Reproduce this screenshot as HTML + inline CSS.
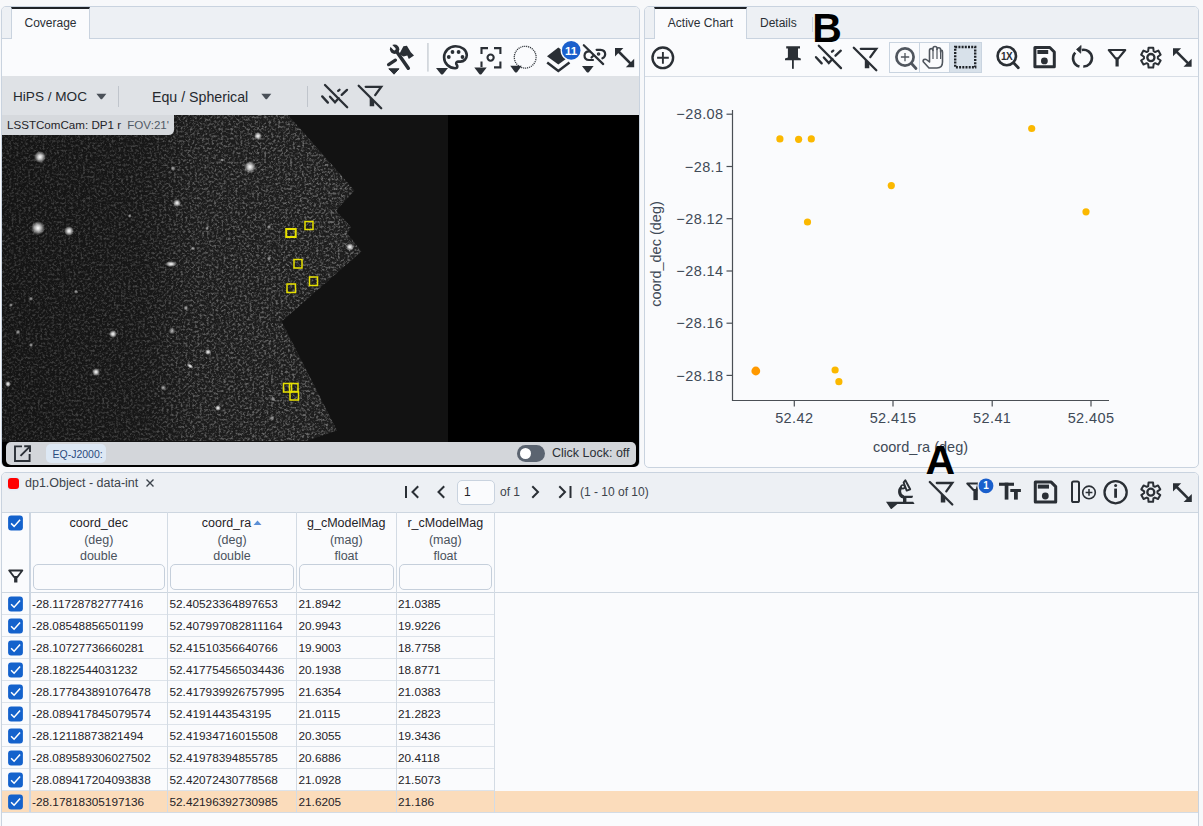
<!DOCTYPE html>
<html><head><meta charset="utf-8">
<style>
*{box-sizing:border-box;margin:0;padding:0}
html,body{width:1203px;height:826px;overflow:hidden;background:#f7f8fa;font-family:"Liberation Sans",sans-serif;color:#1f2328}
.abs{position:absolute}
.panel{position:absolute;border:1px solid #c9d3df;border-radius:5px;background:#fafbfd;overflow:hidden}
.tabbar{position:absolute;left:0;right:0;top:0;height:32px;background:#edf0f4;border-bottom:1px solid #c9d3df}
.tab{position:absolute;top:0;height:32px;background:#fafbfd;border-left:1px solid #c9d3df;border-right:1px solid #c9d3df;border-top:2px solid #1f2328;font-size:12px;color:#2a2f35;text-align:center;line-height:28px}
.tlab{position:absolute;font-size:12px;color:#2a2f35}
.tb{position:absolute;left:0;right:0;height:38px;border-bottom:1px solid #d8dee6;background:#fafbfd}
svg{position:absolute;overflow:visible}
.hd{font-size:12.5px;color:#1f2328;text-align:center;white-space:nowrap}
.hd2{font-size:12.5px;color:#4a525c;text-align:center;white-space:nowrap}
.cell{font-size:11.8px;color:#1f2328;white-space:nowrap}

</style></head><body>

<!-- LEFT PANEL -->
<div class="panel" style="left:1px;top:6px;width:639px;height:461px;">
  <div class="tabbar"></div>
  <div class="tab" style="left:9px;width:79px;">Coverage</div>
  <div class="tb" style="top:32px;"></div>
</div>


<!-- IMAGE AREA -->
<div class="abs" style="left:2px;top:77px;width:637px;height:390px;overflow:hidden;border-radius:0 0 5px 5px"><svg style="left:0;top:0;width:637px;height:390px" width="637" height="390" viewBox="2 77 637 390">
  <defs>
    <filter id="noise" x="2" y="115" width="362" height="328" filterUnits="userSpaceOnUse">
      <feTurbulence type="fractalNoise" baseFrequency="0.42" numOctaves="3" seed="11" result="t"/>
      <feColorMatrix in="t" type="matrix" values="0 0 0 0 1  0 0 0 0 1  0 0 0 0 1  3 0 0 0 -1.35"/>
    </filter>
    <linearGradient id="mg" gradientUnits="userSpaceOnUse" x1="2" x2="362" y1="0" y2="0">
      <stop offset="0" stop-color="#fff" stop-opacity="0.17"/><stop offset="0.4" stop-color="#fff" stop-opacity="0.2"/><stop offset="0.52" stop-color="#fff" stop-opacity="0.29"/><stop offset="1" stop-color="#fff" stop-opacity="0.36"/>
    </linearGradient>
    <mask id="mk" maskUnits="userSpaceOnUse" x="2" y="115" width="362" height="328"><rect x="2" y="115" width="362" height="328" fill="url(#mg)"/></mask>
    <clipPath id="poly"><polygon points="2,115 288,115 354.6,190.5 336,210.7 351,227 347.7,234 361.5,251.4 281.7,321.4 337,430.6 306,441 2,441"/></clipPath>
    <linearGradient id="lg" x1="0" x2="1" y1="0" y2="0">
      <stop offset="0" stop-color="#141414"/><stop offset="0.4" stop-color="#171717"/><stop offset="0.55" stop-color="#1c1c1c"/><stop offset="1" stop-color="#1e1e1e"/>
    </linearGradient>
    <radialGradient id="star"><stop offset="0" stop-color="#fff" stop-opacity="1"/><stop offset="0.35" stop-color="#eee" stop-opacity="0.8"/><stop offset="1" stop-color="#fff" stop-opacity="0"/></radialGradient>
  </defs>
  <rect x="2" y="77" width="637" height="390" fill="#000"/>
  <rect x="2" y="115" width="446" height="327" fill="#121212"/>
  <g clip-path="url(#poly)">
    <rect x="2" y="115" width="360" height="326" fill="url(#lg)"/>
    <g mask="url(#mk)"><rect x="2" y="115" width="360" height="326" filter="url(#noise)"/></g>
    <g fill="url(#star)">
      <circle cx="40" cy="157" r="6"/><circle cx="250" cy="167" r="6"/><circle cx="38" cy="228" r="7"/><circle cx="69" cy="231" r="5"/>
      <circle cx="177" cy="203" r="4"/><ellipse cx="171" cy="264" rx="6" ry="3"/><circle cx="113" cy="334" r="4"/><circle cx="96" cy="372" r="4"/>
      <circle cx="350" cy="247" r="4"/><circle cx="208" cy="352" r="3"/><ellipse cx="190" cy="366" rx="4" ry="2" transform="rotate(35 190 366)"/><circle cx="8" cy="384" r="3"/>
      <circle cx="218" cy="408" r="3"/><circle cx="258" cy="136" r="4"/>
      <g opacity="0.6"><circle cx="172" cy="331" r="3.5"/><circle cx="163.3" cy="387.7" r="3"/><circle cx="31" cy="298.7" r="2.2"/><circle cx="18" cy="332" r="2.5"/>
      <circle cx="31" cy="345" r="2.2"/><circle cx="76" cy="291.7" r="2.2"/><circle cx="185.8" cy="308" r="2.5"/><circle cx="272" cy="418" r="2.5"/><circle cx="273" cy="399" r="2.5"/><circle cx="11" cy="305" r="2"/>
      <circle cx="173" cy="168.6" r="2.5"/><circle cx="129.7" cy="216" r="2"/><circle cx="269" cy="227" r="2.2"/><circle cx="207" cy="228.5" r="2"/><circle cx="193" cy="248.4" r="2.2"/><circle cx="269" cy="258.4" r="2.2"/><circle cx="222" cy="160" r="1.8"/></g>
    </g>
  </g>
  <g fill="none" stroke="#e6e000" stroke-width="1.5">
    <rect x="286.2" y="229" width="9.5" height="8" stroke-width="2"/>
    <rect x="305" y="221.5" width="8" height="8"/>
    <rect x="294" y="259.5" width="8" height="8.5"/>
    <rect x="309.5" y="277" width="8" height="8.5"/>
    <rect x="287" y="284" width="8.5" height="8.5"/>
    <rect x="283.5" y="383.5" width="8" height="8.5"/>
    <rect x="289.5" y="383.5" width="8.5" height="8.5"/>
    <rect x="290" y="391.5" width="8.5" height="8.5"/>
  </g>
</svg></div>
<!-- gray bar over image -->
<div class="abs" style="left:2px;top:76px;width:637px;height:39px;background:#dfe2e6"></div>
<div class="abs" style="left:13px;top:89px;font-size:13.6px;color:#25292e;white-space:nowrap">HiPS / MOC</div>
<div class="abs" style="left:152px;top:89px;font-size:14.2px;color:#25292e;white-space:nowrap">Equ / Spherical</div>
<div class="abs" style="left:118px;top:86px;width:1px;height:21px;background:#c0c5cc"></div>
<div class="abs" style="left:307px;top:86px;width:1px;height:21px;background:#c0c5cc"></div>
<!-- label -->
<div class="abs" style="left:2px;top:115px;width:172px;height:20px;background:#d6d9dd;border-bottom-right-radius:5px"></div>
<div class="abs" style="left:7px;top:118px;font-size:11.6px;color:#1f2328;white-space:nowrap">LSSTComCam: DP1 r <span style="color:#505a66;margin-left:3px">FOV:21'</span></div>
<!-- bottom bar -->
<div class="abs" style="left:6px;top:442px;width:630px;height:23px;background:#d3d6da;border-radius:5px"></div>
<div class="abs" style="left:46px;top:444px;width:60px;height:19px;background:#dde8f4;border-radius:5px"></div>
<div class="abs" style="left:52.5px;top:447.5px;font-size:10.5px;color:#2b4b7c">EQ-J2000:</div>
<div class="abs" style="left:517px;top:445px;width:28px;height:17px;background:#5b6470;border-radius:9px"></div>
<div class="abs" style="left:520px;top:448px;width:11px;height:11px;background:#fff;border-radius:50%"></div>
<div class="abs" style="left:552px;top:446px;font-size:12.5px;color:#2a2f35;white-space:nowrap">Click Lock: off</div>

<!-- RIGHT PANEL -->
<div class="panel" style="left:644px;top:6px;width:555px;height:462px;">
  <div class="tabbar"></div>
  <div class="tab" style="left:9px;width:93px;">Active Chart</div>
  <div class="tlab" style="left:115px;top:9px;">Details</div>
  <div class="abs" style="left:167px;top:10px;width:1px;height:15px;background:#c9d3df"></div>
  <div class="tb" style="top:32px;"></div>
</div>

<!-- TABLE PANEL -->
<div class="panel" style="left:1px;top:472px;width:1198px;height:360px;">
  <div class="abs" style="left:0;right:0;top:0;height:40px;background:#edf0f4;border-bottom:1px solid #c9d3df"></div>
</div>

<svg style="left:0;top:0;width:1203px;height:826px" width="1203" height="826" viewBox="0 0 1203 826">
<g stroke="#4a4f55" stroke-width="1.2" fill="none">
<path d="M732.5,110 V400.5 H1109"/>
<path d="M726.5,114.2 H732.5"/>
<path d="M726.5,166.5 H732.5"/>
<path d="M726.5,218.7 H732.5"/>
<path d="M726.5,271.0 H732.5"/>
<path d="M726.5,323.2 H732.5"/>
<path d="M726.5,375.4 H732.5"/>
<path d="M794.3,400.5 V406.5"/>
<path d="M893.0,400.5 V406.5"/>
<path d="M992.2,400.5 V406.5"/>
<path d="M1091.0,400.5 V406.5"/>
</g>
<g font-family="Liberation Sans" font-size="14.5" fill="#3f4a57" letter-spacing="0.4">
<text x="723.5" y="119.4" text-anchor="end">−28.08</text>
<text x="723.5" y="171.7" text-anchor="end">−28.1</text>
<text x="723.5" y="223.89999999999998" text-anchor="end">−28.12</text>
<text x="723.5" y="276.2" text-anchor="end">−28.14</text>
<text x="723.5" y="328.4" text-anchor="end">−28.16</text>
<text x="723.5" y="380.59999999999997" text-anchor="end">−28.18</text>
<text x="794.3" y="423" text-anchor="middle">52.42</text>
<text x="893.0" y="423" text-anchor="middle">52.415</text>
<text x="992.2" y="423" text-anchor="middle">52.41</text>
<text x="1091.0" y="423" text-anchor="middle">52.405</text>
</g>
<text x="920.5" y="451.5" text-anchor="middle" font-family="Liberation Sans" font-size="14.5" fill="#3f4a57">coord_ra (deg)</text>
<text transform="translate(661,254) rotate(-90)" text-anchor="middle" font-family="Liberation Sans" font-size="14.5" fill="#3f4a57">coord_dec (deg)</text>
<g fill="#fbb800">
<circle cx="779.9" cy="138.9" r="3.6"/>
<circle cx="798.6" cy="139.3" r="3.6"/>
<circle cx="811.3" cy="138.9" r="3.6"/>
<circle cx="1031.7" cy="128.5" r="3.6"/>
<circle cx="891.3" cy="185.6" r="3.6"/>
<circle cx="1086" cy="211.8" r="3.6"/>
<circle cx="807.5" cy="222.0" r="3.6"/>
<circle cx="835.1" cy="370.0" r="3.6"/>
<circle cx="838.9" cy="381.7" r="3.6"/>
</g>
<circle cx="755.8" cy="371" r="4.4" fill="#ff9900"/>
</svg>
<!-- TABLE -->
<div class="abs" style="left:2px;top:512px;width:1196px;height:81px;background:#fafbfd;border-top:1px solid #cdd6e0;border-bottom:1px solid #cdd6e0"></div>
<div class="abs" style="left:2px;top:593px;width:1196px;height:219px;background:#fafbfd"></div>
<div class="abs" style="left:2px;top:791px;width:1196px;height:21px;background:#fbdcbb"></div>
<div class="abs" style="left:2px;top:812px;width:1196px;height:1px;background:#d3dbe4"></div>
<div class="abs" style="left:2px;top:614px;width:493px;height:1px;background:#dde3ea"></div>
<div class="abs" style="left:2px;top:636px;width:493px;height:1px;background:#dde3ea"></div>
<div class="abs" style="left:2px;top:658px;width:493px;height:1px;background:#dde3ea"></div>
<div class="abs" style="left:2px;top:680px;width:493px;height:1px;background:#dde3ea"></div>
<div class="abs" style="left:2px;top:702px;width:493px;height:1px;background:#dde3ea"></div>
<div class="abs" style="left:2px;top:724px;width:493px;height:1px;background:#dde3ea"></div>
<div class="abs" style="left:2px;top:746px;width:493px;height:1px;background:#dde3ea"></div>
<div class="abs" style="left:2px;top:768px;width:493px;height:1px;background:#dde3ea"></div>
<div class="abs" style="left:2px;top:790px;width:493px;height:1px;background:#dde3ea"></div>
<div class="abs" style="left:29px;top:512px;width:2px;height:300px;background:#cbd5e1"></div>
<div class="abs" style="left:167px;top:512px;width:1px;height:300px;background:#d3dbe4"></div>
<div class="abs" style="left:296px;top:512px;width:1px;height:300px;background:#d3dbe4"></div>
<div class="abs" style="left:396px;top:512px;width:1px;height:300px;background:#d3dbe4"></div>
<div class="abs" style="left:494px;top:512px;width:1px;height:300px;background:#d3dbe4"></div>
<div class="abs hd" style="left:30px;top:515.5px;width:137.5px">coord_dec</div>
<div class="abs hd2" style="left:30px;top:533px;width:137.5px">(deg)</div>
<div class="abs hd2" style="left:30px;top:548.5px;width:137.5px">double</div>
<div class="abs" style="left:32.5px;top:564px;width:132.5px;height:26px;border:1px solid #c5cfdb;border-radius:5px;background:#fafbfd"></div>
<div class="abs hd" style="left:162px;top:515.5px;width:129.0px">coord_ra</div>
<div class="abs hd2" style="left:167.5px;top:533px;width:129.0px">(deg)</div>
<div class="abs hd2" style="left:167.5px;top:548.5px;width:129.0px">double</div>
<div class="abs" style="left:170.0px;top:564px;width:124.0px;height:26px;border:1px solid #c5cfdb;border-radius:5px;background:#fafbfd"></div>
<div class="abs hd" style="left:296.5px;top:515.5px;width:99.5px">g_cModelMag</div>
<div class="abs hd2" style="left:296.5px;top:533px;width:99.5px">(mag)</div>
<div class="abs hd2" style="left:296.5px;top:548.5px;width:99.5px">float</div>
<div class="abs" style="left:299.0px;top:564px;width:94.5px;height:26px;border:1px solid #c5cfdb;border-radius:5px;background:#fafbfd"></div>
<div class="abs hd" style="left:396px;top:515.5px;width:98.5px">r_cModelMag</div>
<div class="abs hd2" style="left:396px;top:533px;width:98.5px">(mag)</div>
<div class="abs hd2" style="left:396px;top:548.5px;width:98.5px">float</div>
<div class="abs" style="left:398.5px;top:564px;width:93.5px;height:26px;border:1px solid #c5cfdb;border-radius:5px;background:#fafbfd"></div>
<div class="abs cell" style="left:32px;top:597px">-28.11728782777416</div>
<div class="abs cell" style="left:169.5px;top:597px">52.40523364897653</div>
<div class="abs cell" style="left:298.5px;top:597px">21.8942</div>
<div class="abs cell" style="left:398px;top:597px">21.0385</div>
<div class="abs cell" style="left:32px;top:619px">-28.08548856501199</div>
<div class="abs cell" style="left:169.5px;top:619px">52.407997082811164</div>
<div class="abs cell" style="left:298.5px;top:619px">20.9943</div>
<div class="abs cell" style="left:398px;top:619px">19.9226</div>
<div class="abs cell" style="left:32px;top:641px">-28.10727736660281</div>
<div class="abs cell" style="left:169.5px;top:641px">52.41510356640766</div>
<div class="abs cell" style="left:298.5px;top:641px">19.9003</div>
<div class="abs cell" style="left:398px;top:641px">18.7758</div>
<div class="abs cell" style="left:32px;top:663px">-28.1822544031232</div>
<div class="abs cell" style="left:169.5px;top:663px">52.417754565034436</div>
<div class="abs cell" style="left:298.5px;top:663px">20.1938</div>
<div class="abs cell" style="left:398px;top:663px">18.8771</div>
<div class="abs cell" style="left:32px;top:685px">-28.177843891076478</div>
<div class="abs cell" style="left:169.5px;top:685px">52.417939926757995</div>
<div class="abs cell" style="left:298.5px;top:685px">21.6354</div>
<div class="abs cell" style="left:398px;top:685px">21.0383</div>
<div class="abs cell" style="left:32px;top:707px">-28.089417845079574</div>
<div class="abs cell" style="left:169.5px;top:707px">52.4191443543195</div>
<div class="abs cell" style="left:298.5px;top:707px">21.0115</div>
<div class="abs cell" style="left:398px;top:707px">21.2823</div>
<div class="abs cell" style="left:32px;top:729px">-28.12118873821494</div>
<div class="abs cell" style="left:169.5px;top:729px">52.41934716015508</div>
<div class="abs cell" style="left:298.5px;top:729px">20.3055</div>
<div class="abs cell" style="left:398px;top:729px">19.3436</div>
<div class="abs cell" style="left:32px;top:751px">-28.089589306027502</div>
<div class="abs cell" style="left:169.5px;top:751px">52.41978394855785</div>
<div class="abs cell" style="left:298.5px;top:751px">20.6886</div>
<div class="abs cell" style="left:398px;top:751px">20.4118</div>
<div class="abs cell" style="left:32px;top:773px">-28.089417204093838</div>
<div class="abs cell" style="left:169.5px;top:773px">52.42072430778568</div>
<div class="abs cell" style="left:298.5px;top:773px">21.0928</div>
<div class="abs cell" style="left:398px;top:773px">21.5073</div>
<div class="abs cell" style="left:32px;top:795px">-28.17818305197136</div>
<div class="abs cell" style="left:169.5px;top:795px">52.42196392730985</div>
<div class="abs cell" style="left:298.5px;top:795px">21.6205</div>
<div class="abs cell" style="left:398px;top:795px">21.186</div>

<!-- TABLE TOOLBAR -->
<div class="abs" style="left:8px;top:478px;width:11px;height:11px;background:#f00;border-radius:3px;box-shadow:0 0 0 1.5px #e3ecf6"></div>
<div class="abs" style="left:25px;top:475.5px;font-size:12.5px;color:#3c434b;white-space:nowrap">dp1.Object - data-int</div>
<svg style="left:0;top:0" width="1" height="1"><path d="M146.5,479.5 L153.5,486.5 M153.5,479.5 L146.5,486.5" stroke="#3c434b" stroke-width="1.4"/></svg>
<div class="abs" style="left:456.5px;top:479.5px;width:38.5px;height:25.5px;background:#fafbfd;border:1px solid #c9d3df;border-radius:5px"></div>
<div class="abs" style="left:464px;top:485px;font-size:12px;color:#1f2328">1</div>
<div class="abs" style="left:500px;top:485px;font-size:12px;color:#3c434b;white-space:nowrap">of 1</div>
<div class="abs" style="left:580px;top:485px;font-size:12px;color:#3c434b;white-space:nowrap">(1 - 10 of 10)</div>
<!-- ICONS -->
<svg style="left:0;top:0;width:1203px;height:826px" width="1203" height="826" viewBox="0 0 1203 826">
<g fill="#2a2f35" stroke="none">
<circle cx="394.6" cy="49.3" r="4.7"/>
<path d="M403.4,46.2 L406.9,45.8 L410.8,52.2 L414,55.4 L408.8,59 L407.3,55.6 L403.5,56.5 L399.2,54.2 Z"/>
</g>
<line x1="390.6" y1="45.1" x2="394.4" y2="49" stroke="#fafbfd" stroke-width="2.6" stroke-linecap="round"/>
<line x1="397" y1="52" x2="408.3" y2="68.2" stroke="#2a2f35" stroke-width="3.5" stroke-linecap="round"/>
<line x1="388.6" y1="64.6" x2="395.4" y2="60.2" stroke="#2a2f35" stroke-width="3.3" stroke-linecap="round"/>
<path d="M388.8,68.8 H399 L394,74.2 Z" fill="#2a2f35" stroke="#2a2f35" stroke-width="1" stroke-linejoin="round"/>
<rect x="427" y="43" width="1.8" height="28.6" fill="#d3d7dd"/>
<path d="M455.5,46.2 c-6.4,0 -11.4,5 -11.4,11 c0,6.2 5,11 11,11 c1.5,0 2.2,-1 2.2,-2 c0,-0.6 -0.3,-1 -0.6,-1.4 c-0.3,-0.4 -0.5,-0.8 -0.5,-1.3 c0,-1 0.8,-1.9 1.9,-1.9 h2.3 c3.5,0 6.4,-2.9 6.4,-6.3 c0,-5.3 -5.1,-9.1 -11.3,-9.1 z" fill="none" stroke="#2a2f35" stroke-width="2.6"/>
<g fill="#2a2f35"><circle cx="452.5" cy="52" r="1.9"/><circle cx="458.6" cy="52" r="1.9"/><circle cx="448.8" cy="57" r="1.9"/><circle cx="462.5" cy="57" r="1.9"/></g>
<path d="M436.0,68.1 H448.0 L443.2,74.0 Q442,75.1 440.8,74.0 Z" fill="#2a2f35"/>
<g fill="none" stroke="#2a2f35" stroke-width="2.1">
<path d="M481.5,54 V48.1 H488"/><path d="M494,48.1 H500.4 V54"/><path d="M500.4,61.5 V67.4 H494"/><path d="M481.5,61.5 V67"/>
<circle cx="490.6" cy="57.6" r="3.1"/></g>
<path d="M474.3,67.6 H486.7 L481.7,73.9 Q480.5,75.0 479.3,73.9 Z" fill="#2a2f35"/>
<circle cx="525.2" cy="57.2" r="10.9" fill="none" stroke="#2a2f35" stroke-width="1.3" stroke-dasharray="1.1,0.9"/>
<path d="M510.25,65.8 H521.75 L517.2,71.89999999999999 Q516,72.99999999999999 514.8,71.89999999999999 Z" fill="#2a2f35"/>
<path d="M547,56.2 L558.3,47.5 L570,56 L558.3,64.4 Z" fill="#2a2f35"/>
<path d="M547.2,62.4 L558.3,71 L569.5,62.4" fill="none" stroke="#2a2f35" stroke-width="2.5"/>
<circle cx="571.2" cy="50.4" r="10.6" fill="#fafbfd"/>
<circle cx="571.2" cy="50.4" r="9.3" fill="#1a5fcc"/><text x="571.2" y="54.54" text-anchor="middle" font-family="Liberation Sans" font-weight="bold" font-size="11.5" fill="#fff">11</text>
<g fill="none" stroke="#2a2f35" stroke-width="2.2" stroke-linecap="round">
<line x1="583.8" y1="45.2" x2="603.2" y2="64.1"/>
<path d="M590,51.5 q-5,-0.5 -5.5,4 q0,4.3 4.5,4.5 h4"/>
<path d="M596.6,49.8 H600.5 Q605.2,50.2 605.2,54.2 Q605,57.2 602.4,58.3"/>
<path d="M591.5,57.5 l1.5,-1.5"/>
<circle cx="598.6" cy="54" r="0.7" fill="#2a2f35"/>
</g>
<path d="M582.0,65.95 H593.5999999999999 L589.0,71.95 Q587.8,73.05 586.5999999999999,71.95 Z" fill="#2a2f35"/>
<g fill="#2a2f35"><path d="M615,48 h8.387368421052633 l-8.387368421052633,8.387368421052633 z"/><path d="M634.2,67.2 h-8.387368421052633 l8.387368421052633,-8.387368421052633 z"/></g><line x1="618.0315789473684" y1="51.03157894736842" x2="631.1684210526316" y2="64.16842105263159" stroke="#2a2f35" stroke-width="2.6"/>
<path d="M96.4,93.65 H106.4 L102.4,98.75 Q101.4,99.75 100.4,98.75 Z" fill="#4a5058"/>
<path d="M261.3,93.65 H271.3 L267.3,98.75 Q266.3,99.75 265.3,98.75 Z" fill="#4a5058"/>
<g stroke="#2a2f35" stroke-width="2.3" stroke-linecap="round" fill="none"><line x1="325" y1="85" x2="347.2" y2="107.3"/><line x1="322.2" y1="96.4" x2="327.9" y2="102.6"/><path d="M330,96.7 L335,102.2 L338.6,98.2"/><line x1="338.2" y1="90.9" x2="339.5" y2="89.8"/><line x1="341.7" y1="94.9" x2="347" y2="89.9"/></g>
<g stroke="#2a2f35" stroke-width="2.3" stroke-linecap="round" fill="none"><line x1="358.7" y1="85.8" x2="381.2" y2="108.3"/><path d="M365.7,86.8 H381.2 L375.2,95.1"/></g><path d="M369.7,97.3 L374.2,101.8 V106.3 H369.7 Z" fill="#2a2f35"/>
<g fill="none" stroke="#2a2f35" stroke-width="1.9">
<path d="M22,446.4 H15 V461 H29.6 V454"/><path d="M20.5,455.8 L30,446.3"/><path d="M24.2,446.3 H30 V452"/></g>
<circle cx="662.8" cy="57.8" r="10.3" fill="none" stroke="#2a2f35" stroke-width="2.4"/>
<path d="M657.1,57.8 H668.8 M662.9,52.1 V63.8" stroke="#2a2f35" stroke-width="1.9"/>
<path d="M786.2,46.2 H800 V48.4 H798 V57.5 L800.8,58.5 V60.3 H785 V58.5 L787.9,57.5 V48.4 H786.2 Z" fill="#2a2f35"/>
<rect x="792" y="60" width="1.8" height="8.8" fill="#2a2f35"/>
<g stroke="#2a2f35" stroke-width="2.3" stroke-linecap="round" fill="none"><line x1="818.8" y1="45.8" x2="841.0" y2="68.1"/><line x1="816.0" y1="57.199999999999996" x2="821.6999999999999" y2="63.4"/><path d="M823.8,57.5 L828.8,63.0 L832.4,59.0"/><line x1="832.0" y1="51.699999999999996" x2="833.3" y2="50.599999999999994"/><line x1="835.5" y1="55.699999999999996" x2="840.8" y2="50.699999999999996"/></g>
<g stroke="#2a2f35" stroke-width="2.3" stroke-linecap="round" fill="none"><line x1="853.8" y1="47.8" x2="876.3" y2="70.3"/><path d="M860.8,48.8 H876.3 L870.3,57.099999999999994"/></g><path d="M864.8,59.3 L869.3,63.8 V68.3 H864.8 Z" fill="#2a2f35"/>
<rect x="889.5" y="42.5" width="92" height="30" fill="#fafbfd" stroke="#c9d4e0" stroke-width="1"/>
<rect x="949.5" y="43" width="31.5" height="29" fill="#d8e1ea"/>
<path d="M919.5,42.5 V72.5 M949.5,42.5 V72.5" stroke="#c9d4e0" stroke-width="1"/>
<circle cx="905" cy="57" r="8.6" fill="none" stroke="#50565e" stroke-width="2.7"/>
<line x1="911.5" y1="63.5" x2="916" y2="68.5" stroke="#50565e" stroke-width="2.7" stroke-linecap="round"/>
<path d="M900.9,57 H909.2 M905,52.9 V61.2" stroke="#50565e" stroke-width="1.3"/>
<path d="M929,68 L923.5,62 Q922.5,60.5 924,59.5 Q925.5,58.8 927,60 L929.5,62 V50.5 Q929.5,48.6 931.3,48.6 Q933,48.6 933,50.5 V48.5 Q933,46.5 935,46.5 Q937,46.5 937,48.5 V49.5 Q937,47.8 938.8,47.8 Q940.6,47.8 940.6,49.8 V52 Q940.6,50.4 941.6,50.4 Q942.5,50.4 942.5,52 V62 Q942.5,68 937,68 Z" fill="none" stroke="#50565e" stroke-width="1.6" stroke-linejoin="round"/>
<path d="M933,50 V59 M937,49 V59 M940.6,52 V59" stroke="#50565e" stroke-width="1.2"/>
<rect x="955.2" y="47" width="20" height="20.3" fill="none" stroke="#1f2328" stroke-width="2.4" stroke-dasharray="2,1.2"/>
<circle cx="1006.8" cy="56" r="9.2" fill="none" stroke="#2a2f35" stroke-width="2.6"/><line x1="1013.8" y1="63" x2="1018.3" y2="67.8" stroke="#2a2f35" stroke-width="2.8" stroke-linecap="round"/><text x="1006.5" y="59.6" text-anchor="middle" font-family="Liberation Sans" font-size="10" font-weight="bold" fill="#2a2f35" letter-spacing="-0.5">1X</text>
<path d="M1034.9,47.5 H1049.8000000000002 L1054.3000000000002,52 V66.8 H1034.9 Z" fill="none" stroke="#2a2f35" stroke-width="3" stroke-linejoin="round"/><rect x="1037.4" y="50" width="10.8" height="4" fill="#2a2f35"/><circle cx="1044.4" cy="60.9" r="3.4" fill="#2a2f35"/>
<path d="M1083.25,66.52 A8.4,8.4 0 1 0 1081.79,49.91" fill="none" stroke="#2a2f35" stroke-width="2.6"/><path d="M1079.47,66.45 A8.4,8.4 0 0 1 1075.26,52.68" fill="none" stroke="#2a2f35" stroke-width="2.6"/><path d="M1076.5,49.4 L1081.1,45.5 L1080.7,53.199999999999996 Z" fill="#2a2f35" stroke="#2a2f35" stroke-width="0.8" stroke-linejoin="round"/>
<path d="M1108.8,50 H1125.2 L1118.3999999999999,58.4 H1115.6 Z" fill="none" stroke="#2a2f35" stroke-width="2.2" stroke-linejoin="round"/><rect x="1115.5" y="58" width="3.2" height="8.5" fill="#2a2f35"/>
<path d="M1148.17,51.15 L1148.57,47.67 L1153.23,47.67 L1153.63,51.15 L1155.12,52.02 L1158.34,50.62 L1160.66,54.65 L1157.85,56.74 L1157.85,58.46 L1160.66,60.55 L1158.34,64.58 L1155.12,63.18 L1153.63,64.05 L1153.23,67.53 L1148.57,67.53 L1148.17,64.05 L1146.68,63.18 L1143.46,64.58 L1141.14,60.55 L1143.95,58.46 L1143.95,56.74 L1141.14,54.65 L1143.46,50.62 L1146.68,52.02 Z" fill="none" stroke="#2a2f35" stroke-width="2.0" stroke-linejoin="round"/><circle cx="1150.9" cy="57.6" r="3.58" fill="none" stroke="#2a2f35" stroke-width="2.3"/>
<g fill="#2a2f35"><path d="M1173,48.2 h8.125263157894738 l-8.125263157894738,8.125263157894738 z"/><path d="M1191.6,66.80000000000001 h-8.125263157894738 l8.125263157894738,-8.125263157894738 z"/></g><line x1="1175.9368421052632" y1="51.13684210526316" x2="1188.6631578947367" y2="63.86315789473685" stroke="#2a2f35" stroke-width="2.6"/>
<g fill="none" stroke="#2a2f35" stroke-width="2" stroke-linecap="square">
<path d="M406,487 V497"/><path d="M417.5,487 L412.5,492 L417.5,497"/>
<path d="M443.5,487 L438.5,492 L443.5,497"/>
<path d="M533,487 L538,492 L533,497"/>
<path d="M560,487 L565,492 L560,497"/><path d="M570.5,487 V497"/></g>
<g fill="#2a2f35">
<path d="M886,501.7 H913.2 L914.6,503.9 H897.4 L891.8,508.8 Q891.3,509.2 890.7,508.7 Z"/>
<rect x="903" y="497.5" width="3.4" height="4.5"/>
<path d="M901.2,495.8 H913 Q913,498.1 911.6,498.1 H901.2 Z"/>
<circle cx="902.9" cy="486.8" r="2.6"/>
</g>
<path d="M903.2,486.4 A5.6,5.6 0 0 0 903.6,497" fill="none" stroke="#2a2f35" stroke-width="3.1"/>
<path d="M905.3,480.2 L910.2,489.3 L906.7,490.6 L903.6,482.5 Z" fill="none" stroke="#2a2f35" stroke-width="1.9" stroke-linejoin="round"/>
<circle cx="902.9" cy="486.8" r="1" fill="#eef0f4"/>
<g stroke="#2a2f35" stroke-width="2.3" stroke-linecap="round" fill="none"><line x1="929.8" y1="482" x2="952.3" y2="504.5"/><path d="M936.8,483 H952.3 L946.3,491.3"/></g><path d="M940.8,493.5 L945.3,498 V502.5 H940.8 Z" fill="#2a2f35"/>
<path d="M967.3,483.5 H978.5 L976.5,490 H973.5 Z" fill="none" stroke="#2a2f35" stroke-width="2.1" stroke-linejoin="round"/><rect x="973.4" y="489.5" width="4.4" height="10.6" fill="#2a2f35"/>
<circle cx="986" cy="485.8" r="8.8" fill="#eef0f4"/>
<circle cx="986" cy="485.8" r="7.4" fill="#1a5fcc"/><text x="986" y="489.40000000000003" text-anchor="middle" font-family="Liberation Sans" font-weight="bold" font-size="10" fill="#fff">1</text>
<g fill="#2a2f35"><rect x="999" y="482.7" width="15" height="3.1"/><rect x="1004.7" y="482.7" width="3.7" height="16.9"/>
<rect x="1010.3" y="489" width="10.6" height="3"/><rect x="1014" y="489" width="3.8" height="10.6"/></g>
<path d="M1035.3,482.1 H1051.2 L1055.7,486.6 V502.1 H1035.3 Z" fill="none" stroke="#2a2f35" stroke-width="3" stroke-linejoin="round"/><rect x="1037.8" y="484.6" width="11.2" height="4" fill="#2a2f35"/><circle cx="1045.3" cy="496.0" r="3.4" fill="#2a2f35"/>
<rect x="1072" y="481.5" width="7" height="20.5" rx="1.6" fill="none" stroke="#2a2f35" stroke-width="2"/>
<circle cx="1089" cy="492.4" r="6.3" fill="none" stroke="#2a2f35" stroke-width="1.6"/>
<path d="M1085.6,492.4 H1092.4 M1089,489 V495.8" stroke="#2a2f35" stroke-width="1.5"/>
<circle cx="1115.6" cy="492.2" r="11.1" fill="none" stroke="#2a2f35" stroke-width="2.3"/>
<circle cx="1115.6" cy="485.6" r="1.5" fill="#2a2f35"/><rect x="1114.2" y="488.6" width="2.8" height="9.2" fill="#2a2f35"/>
<path d="M1148.19,486.03 L1148.54,482.56 L1153.06,482.56 L1153.41,486.03 L1154.84,486.85 L1158.02,485.43 L1160.28,489.33 L1157.45,491.37 L1157.45,493.03 L1160.28,495.07 L1158.02,498.97 L1154.84,497.55 L1153.41,498.37 L1153.06,501.84 L1148.54,501.84 L1148.19,498.37 L1146.76,497.55 L1143.58,498.97 L1141.32,495.07 L1144.15,493.03 L1144.15,491.37 L1141.32,489.33 L1143.58,485.43 L1146.76,486.85 Z" fill="none" stroke="#2a2f35" stroke-width="2.0" stroke-linejoin="round"/><circle cx="1150.8" cy="492.2" r="3.49" fill="none" stroke="#2a2f35" stroke-width="2.3"/>
<g fill="#2a2f35"><path d="M1173,483.3 h8.21263157894737 l-8.21263157894737,8.21263157894737 z"/><path d="M1191.8,502.1 h-8.21263157894737 l8.21263157894737,-8.21263157894737 z"/></g><line x1="1175.9684210526316" y1="486.2684210526316" x2="1188.8315789473684" y2="499.13157894736844" stroke="#2a2f35" stroke-width="2.6"/>
<rect x="8.1" y="515.6" width="14.8" height="15" rx="3" fill="#1462cc"/><path d="M11.1,523.4 L14.1,526.4 L20.1,519.8000000000001" fill="none" stroke="#fff" stroke-width="1.5"/>
<rect x="8.1" y="596.4" width="14.8" height="15" rx="3" fill="#1462cc"/><path d="M11.1,604.1999999999999 L14.1,607.1999999999999 L20.1,600.6" fill="none" stroke="#fff" stroke-width="1.5"/>
<rect x="8.1" y="618.4" width="14.8" height="15" rx="3" fill="#1462cc"/><path d="M11.1,626.1999999999999 L14.1,629.1999999999999 L20.1,622.6" fill="none" stroke="#fff" stroke-width="1.5"/>
<rect x="8.1" y="640.4" width="14.8" height="15" rx="3" fill="#1462cc"/><path d="M11.1,648.1999999999999 L14.1,651.1999999999999 L20.1,644.6" fill="none" stroke="#fff" stroke-width="1.5"/>
<rect x="8.1" y="662.4" width="14.8" height="15" rx="3" fill="#1462cc"/><path d="M11.1,670.1999999999999 L14.1,673.1999999999999 L20.1,666.6" fill="none" stroke="#fff" stroke-width="1.5"/>
<rect x="8.1" y="684.4" width="14.8" height="15" rx="3" fill="#1462cc"/><path d="M11.1,692.1999999999999 L14.1,695.1999999999999 L20.1,688.6" fill="none" stroke="#fff" stroke-width="1.5"/>
<rect x="8.1" y="706.4" width="14.8" height="15" rx="3" fill="#1462cc"/><path d="M11.1,714.1999999999999 L14.1,717.1999999999999 L20.1,710.6" fill="none" stroke="#fff" stroke-width="1.5"/>
<rect x="8.1" y="728.4" width="14.8" height="15" rx="3" fill="#1462cc"/><path d="M11.1,736.1999999999999 L14.1,739.1999999999999 L20.1,732.6" fill="none" stroke="#fff" stroke-width="1.5"/>
<rect x="8.1" y="750.4" width="14.8" height="15" rx="3" fill="#1462cc"/><path d="M11.1,758.1999999999999 L14.1,761.1999999999999 L20.1,754.6" fill="none" stroke="#fff" stroke-width="1.5"/>
<rect x="8.1" y="772.4" width="14.8" height="15" rx="3" fill="#1462cc"/><path d="M11.1,780.1999999999999 L14.1,783.1999999999999 L20.1,776.6" fill="none" stroke="#fff" stroke-width="1.5"/>
<rect x="8.1" y="794.4" width="14.8" height="15" rx="3" fill="#1462cc"/><path d="M11.1,802.1999999999999 L14.1,805.1999999999999 L20.1,798.6" fill="none" stroke="#fff" stroke-width="1.5"/>
<path d="M9.2,570.5 H22.3 L17.4,577 H14.1 Z" fill="none" stroke="#2a2f35" stroke-width="1.9" stroke-linejoin="round"/><rect x="14.1" y="576.5" width="3.3" height="6" fill="#2a2f35"/>
<path d="M253.5,525 H261.5 L257.5,520.5 Z" fill="#5b8fd6"/>
<text x="827" y="42" text-anchor="middle" font-family="Liberation Sans" font-weight="bold" font-size="41" fill="#000">B</text>
<text x="940.3" y="474" text-anchor="middle" font-family="Liberation Sans" font-weight="bold" font-size="41" fill="#000">A</text>
</svg>
<!-- /ICONS -->
</body></html>
